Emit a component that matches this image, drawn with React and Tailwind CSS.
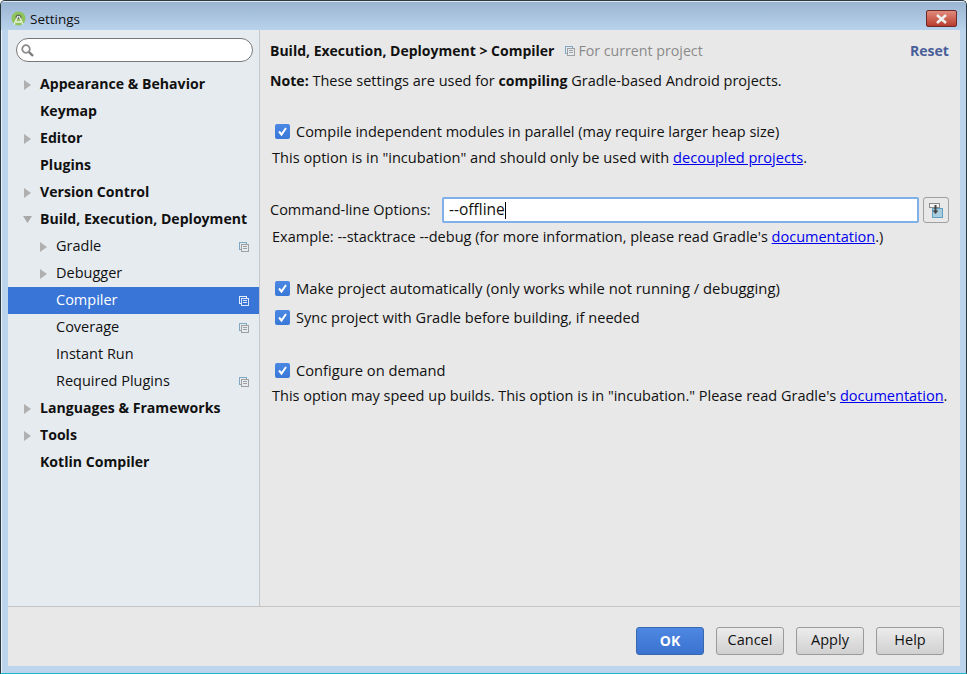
const font = { fontFamily: '"Open Sans", "Noto Sans", sans-serif' }

const tree = [
  { label: 'Appearance & Behavior', bold: true, arrow: true },
  { label: 'Keymap', bold: true },
  { label: 'Editor', bold: true, arrow: true },
  { label: 'Plugins', bold: true },
  { label: 'Version Control', bold: true, arrow: true },
  { label: 'Build, Execution, Deployment', bold: true, open: true },
  { label: 'Gradle', sub: true, arrow: true, copy: true },
  { label: 'Debugger', sub: true, arrow: true },
  { label: 'Compiler', sub: true, copy: true, selected: true },
  { label: 'Coverage', sub: true, copy: true },
  { label: 'Instant Run', sub: true },
  { label: 'Required Plugins', sub: true, copy: true },
  { label: 'Languages & Frameworks', bold: true, arrow: true },
  { label: 'Tools', bold: true, arrow: true },
  { label: 'Kotlin Compiler', bold: true },
]

function AndroidLogo() {
  return (
    <svg width="15" height="15" viewBox="0 0 15 15" className="shrink-0 mt-[1px]">
      <circle cx="7.5" cy="7.5" r="7" fill="#8fc35c" />
      <path d="M4.5 6.5a3 3 0 0 1 6 0l-1 1.5h-4z" fill="#5d6b55" />
      <path d="M3 13.5L7 5M12 13.5L8 5M5 11h5" stroke="#eef2e8" strokeWidth="1.3" fill="none" />
    </svg>
  )
}

function CopyIcon({ white }) {
  const back = white ? '#e4edfb' : '#7fa8c4'
  const front = white ? '#dbe6f8' : '#a0a0a0'
  return (
    <svg width="10" height="10" viewBox="0 0 10 10" className="shrink-0">
      <rect x="0.5" y="0.5" width="7" height="7" fill="none" stroke={back} />
      <rect x="2.5" y="2.5" width="7" height="7" fill={white ? '#3875d7' : '#e6ebf0'} stroke={front} />
      <path d="M4 4.5h4M4 6.5h4" stroke={front} />
    </svg>
  )
}

function Arrow({ open }) {
  if (open) {
    return (
      <svg width="9" height="9" viewBox="0 0 9 9" className="shrink-0">
        <path d="M0 1h9L4.5 8z" fill="#a8a8a8" />
      </svg>
    )
  }
  return (
    <svg width="9" height="10" viewBox="0 0 9 10" className="shrink-0">
      <path d="M1 0l7 5-7 5z" fill="#b0b0b0" />
    </svg>
  )
}

function TreeRow({ item }) {
  const rowBg = item.selected ? 'bg-[#3875d7] text-white' : 'text-[#111]'
  return (
    <div className={`h-[27px] flex items-center pr-[10px] ${rowBg} ${item.sub ? 'pl-[31px]' : 'pl-[15px]'}`}>
      <div className="w-[17px] shrink-0 flex items-center">
        {item.arrow && <Arrow />}
        {item.open && <Arrow open />}
      </div>
      <span className={`flex-1 whitespace-nowrap pb-[2px] ${item.bold ? 'font-bold text-[14.1px]' : 'text-[14.5px]'}`}>
        {item.label}
      </span>
      {item.copy && <CopyIcon white={item.selected} />}
    </div>
  )
}

function Check({ children, textSize = 'text-[14.5px]' }) {
  return (
    <div className="flex items-center h-[29px] pl-[5px] gap-[6px]">
      <span className="w-[15px] h-[15px] rounded-[2px] bg-gradient-to-b from-[#4a88e4] to-[#3a78d8] flex items-center justify-center shrink-0">
        <svg width="11" height="11" viewBox="0 0 11 11">
          <path d="M2 5.5l2.5 3L9 2" stroke="#fff" strokeWidth="2" fill="none" />
        </svg>
      </span>
      <span className={`${textSize} whitespace-nowrap`}>{children}</span>
    </div>
  )
}

function Link({ children }) {
  return <a className="text-[#0000ee] underline">{children}</a>
}

function DialogButton({ children, primary }) {
  const look = primary
    ? 'bg-gradient-to-b from-[#4d88e2] to-[#3a72d0] border-[#3a68b0] text-white font-bold text-[14px]'
    : 'bg-gradient-to-b from-[#ececec] to-[#d0d0d0] border-[#9a9a9a] text-[#111] text-[14.5px]'
  return (
    <button className={`w-[68px] h-[28px] rounded-[3px] border pb-[2px] flex items-center justify-center ${look}`}>
      {children}
    </button>
  )
}

export default function App() {
  return (
    <div
      style={font}
      className="w-[967px] h-[674px] overflow-hidden flex flex-col rounded-t-[5px] border border-[#2a3a40] border-b-[#1cb8d0] bg-[#bcd4ec] text-[#111] shadow-[inset_1px_0_0_#e8f0f8]"
    >
      <div className="h-[29px] shrink-0 flex items-start border-t border-[#dfe8f2] pt-[8px] pl-[10px] pr-[9px] gap-[4px] bg-gradient-to-b from-[#9ab5d2] to-[#b9d2ec]">
        <AndroidLogo />
        <span className="flex-1 text-[13.5px] leading-[19px]">Settings</span>
        <div className="w-[31px] h-[17px] rounded-[2px] border border-[#6a2a2a] bg-gradient-to-b from-[#e08a7c] to-[#b83a2c] flex items-center justify-center">
          <svg width="13" height="10" viewBox="0 0 13 10">
            <path d="M2 1l9 8M11 1l-9 8" stroke="#f0f0f0" strokeWidth="2.6" />
          </svg>
        </div>
      </div>

      <div className="flex-1 ml-[7px] mr-[6px] flex flex-col bg-[#e8e8e8] min-h-0">
        <div className="flex-1 flex min-h-0">
          <aside className="w-[252px] shrink-0 bg-[#e6ebf0] border-r border-[#c4c8cc] pt-[8px]">
            <div className="ml-[8px] mr-[6px] h-[24px] rounded-full border border-[#777] bg-white flex items-center pl-[4px] mb-[9px]">
              <svg width="13" height="13" viewBox="0 0 13 13">
                <circle cx="5" cy="5" r="3.8" fill="none" stroke="#8c8c8c" strokeWidth="1.8" />
                <path d="M8 8l4 4" stroke="#7a7a7a" strokeWidth="2.4" />
              </svg>
            </div>
            {tree.map((item) => (
              <TreeRow key={item.label} item={item} />
            ))}
          </aside>

          <main className="flex-1 min-w-0 pl-[10px] pr-[11px] pt-[10px] text-[14.5px]">
            <div className="flex items-center h-[22px]">
              <span className="font-bold text-[14px] pb-[1px] whitespace-nowrap">Build, Execution, Deployment &gt; Compiler</span>
              <span className="ml-[11px] mr-[3px]"><CopyIcon /></span>
              <span className="flex-1 text-[14.2px] text-[#8a8a8a] whitespace-nowrap">For current project</span>
              <span className="font-bold text-[14.1px] pb-[1px] text-[#4a5f9a]">Reset</span>
            </div>
            <p className="mt-[8px] h-[22px] leading-[22px] whitespace-nowrap">
              <b className="text-[14.1px]">Note:</b> These settings are used for <b className="text-[14.1px]">compiling</b> Gradle-based Android projects.
            </p>

            <div className="mt-[25px]">
              <Check>Compile independent modules in parallel (may require larger heap size)</Check>
            </div>
            <p className="pl-[2px] h-[22px] leading-[22px] text-[14.6px] whitespace-nowrap">
              This option is in "incubation" and should only be used with <Link>decoupled projects</Link>.
            </p>

            <div className="mt-[29px] flex items-center h-[26px]">
              <span className="whitespace-nowrap w-[172px] shrink-0">Command-line Options:</span>
              <div className="flex-1 h-[26px] rounded-[2px] border-2 border-[#7fb0ea] bg-white flex items-center pl-[5px]">
                <span className="text-[15.5px]">--offline</span>
                <span className="w-px h-[17px] bg-black" />
              </div>
              <div className="ml-[4px] w-[26px] h-[26px] rounded-[3px] border border-[#a0a0a0] flex items-center justify-center">
                <svg width="14" height="15" viewBox="0 0 14 15">
                  <rect x="0.5" y="0.5" width="10" height="4" fill="#f4f4f4" stroke="#8a8a8a" />
                  <rect x="3.5" y="5.5" width="10" height="9" fill="#a9cde0" stroke="#5f9fc0" />
                  <path d="M6.5 2v6" stroke="#444" strokeWidth="2" />
                  <path d="M3.5 7.5h6L6.5 11z" fill="#444" />
                </svg>
              </div>
            </div>
            <p className="mt-[3px] pl-[2px] h-[22px] leading-[22px] whitespace-nowrap">
              Example: --stacktrace --debug (for more information, please read Gradle's <Link>documentation</Link>.)
            </p>

            <div className="mt-[26px]">
              <Check textSize="text-[14.8px]">Make project automatically (only works while not running / debugging)</Check>
              <Check textSize="text-[14.6px]">Sync project with Gradle before building, if needed</Check>
            </div>

            <div className="mt-[24px]">
              <Check textSize="text-[14.7px]">Configure on demand</Check>
            </div>
            <p className="pl-[2px] h-[22px] leading-[22px] whitespace-nowrap">
              This option may speed up builds. This option is in "incubation." Please read Gradle's <Link>documentation</Link>.
            </p>
          </main>
        </div>

        <footer className="h-[60px] shrink-0 border-t border-[#c4c4c4] flex items-start justify-end gap-[12px] pt-[20px] pr-[16px]">
          <DialogButton primary>OK</DialogButton>
          <DialogButton>Cancel</DialogButton>
          <DialogButton>Apply</DialogButton>
          <DialogButton>Help</DialogButton>
        </footer>
      </div>
      <div className="h-[7px] shrink-0" />
    </div>
  )
}
